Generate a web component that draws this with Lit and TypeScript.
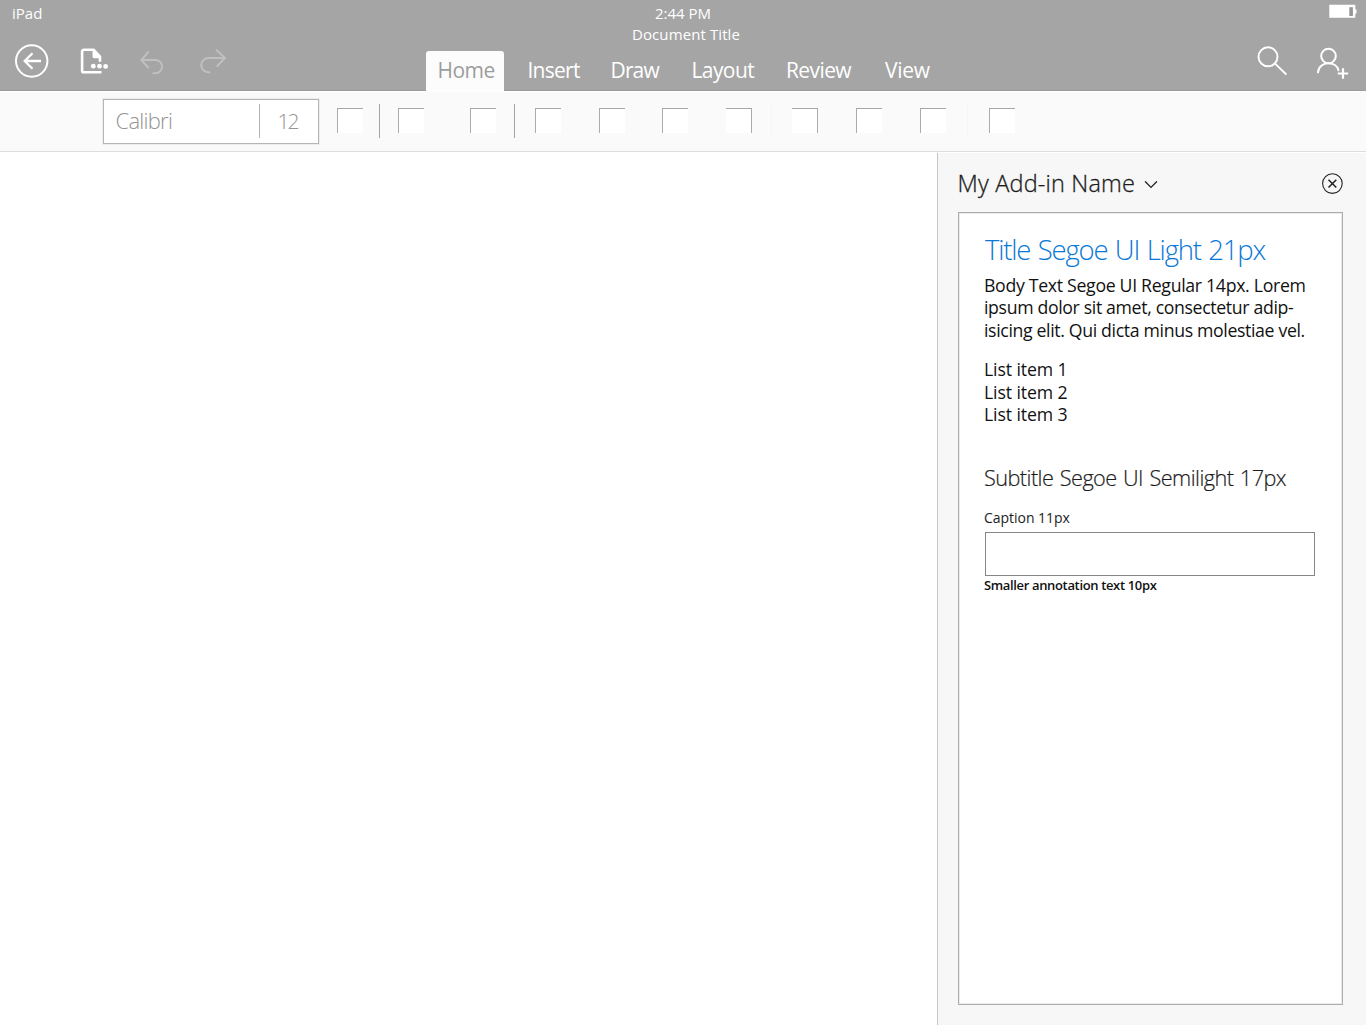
import { LitElement, html, css } from 'lit';
import { customElement } from 'lit/decorators.js';
import { classMap } from 'lit/directives/class-map.js';

const shared = css`
  :host, * { box-sizing: border-box; }
  svg { display: block; fill: none; stroke-linecap: round; stroke-linejoin: round; }
`;

const TABS = ['Home', 'Insert', 'Draw', 'Layout', 'Review', 'View'];

@customElement('app-header')
class AppHeader extends LitElement {
  static styles = [shared, css`
    :host { display: block; height: 91px; background: #a5a5a5; border-bottom: 1px solid #9b9b9b; color: #fff; }
    .status { display: grid; grid-template-columns: 1fr 120px 1fr; height: 26px; line-height: 26px; font-size: 15px; }
    .device { padding-left: 12px; }
    .time { text-align: center; }
    .battery { justify-self: end; padding: 4px 9px 0 0; }
    .main { display: flex; height: 65px; }
    .left { width: 426px; display: flex; padding: 18px 0 0 15px; }
    .back { margin-right: 29px; }
    .doc { margin: 2px 30px 0 0; }
    .undo { margin: 5px 34px 0 0; }
    .redo { margin-top: 4px; }
    .center { width: 520px; display: flex; flex-direction: column; }
    .title { height: 17px; line-height: 17px; font-size: 15px; letter-spacing: .1px; text-align: center; margin-bottom: 8px; }
    .tabs { display: flex; height: 40px; font-size: 21px; line-height: 38px; }
    .tab { flex: none; white-space: nowrap; }
    .home { width: 78px; padding-left: 11.5px; letter-spacing: -.5px; background: #fcfcfc; color: #9c9c9c; border-radius: 3px 3px 0 0; }
    .insert { margin-left: 23.500px; width: 83px; letter-spacing: -.75px; }
    .draw { width: 81px; letter-spacing: -.85px; }
    .layout { width: 94.500px; letter-spacing: -.6px; }
    .review { width: 99px; letter-spacing: -.6px; }
    .view { letter-spacing: -.3px; }
    .right { display: flex; margin-left: auto; padding: 20px 17px 0 0; }
    .search { margin-right: 29px; }
  `];

  render() {
    return html`
      <div class="status">
        <div class="device">iPad</div>
        <div class="time">2:44 PM</div>
        <div class="battery">
          <svg width="28" height="15" viewBox="0 0 28 15">
            <path fill="#fff" d="M.3.8h26v4.7h1.2v4h-1.2v4.2H.3z"/>
            <path fill="#969696" d="M20.3 3.2h3.6v8.8h-3.6z"/>
          </svg>
        </div>
      </div>
      <div class="main">
        <div class="left">
          <svg class="back" width="34" height="34" viewBox="0 0 34 34" stroke="#fff" stroke-width="2">
            <circle cx="16.7" cy="17" r="15.7"/>
            <path stroke-width="2.3" stroke-linecap="butt" stroke-linejoin="miter" d="M26 17H10M17.5 9.3L9.7 17l7.8 7.7"/>
          </svg>
          <svg class="doc" width="32" height="30" viewBox="0 0 32 30">
            <path stroke="#fff" stroke-width="2.6" stroke-linecap="butt" d="M23.5 26.3H6a1.9 1.9 0 0 1-1.9-1.9V5.6A1.9 1.9 0 0 1 6 3.700H15.500L22 10.600v5.200"/>
            <path fill="#fff" d="M14.500 3.700L23 12.300h-6.800a1.700 1.700 0 0 1-1.700-1.700z"/>
            <g fill="#fff"><circle cx="15.300" cy="20.200" r="2.400"/><circle cx="21.500" cy="20.200" r="2.400"/><circle cx="27.600" cy="20.400" r="2.400"/></g>
          </svg>
          <svg class="undo" width="25" height="28" viewBox="0 0 25 28" stroke="#c0c0c0" stroke-width="1.900">
            <path stroke-linejoin="miter" d="M8.300 3L1.300 11l7 7.500M1.800 11h13.700a6.400 6.400 0 0 1 0 13.200h-2.300"/>
          </svg>
          <svg class="redo" width="28" height="28" viewBox="0 0 28 28" stroke="#c0c0c0" stroke-width="1.900">
            <path stroke-linejoin="miter" d="M17.500 2L26 10l-7.700 8M25.500 10H9.300a7 7 0 0 0 0 14.200h1.200"/>
          </svg>
        </div>
        <div class="center">
          <div class="title">Document Title</div>
          <div class="tabs">
            ${TABS.map((t) => html`<div class=${classMap({ tab: true, [t.toLowerCase()]: true })}>${t}</div>`)}
          </div>
        </div>
        <div class="right">
          <svg class="search" width="31" height="30" viewBox="0 0 31 30" stroke="#fff" stroke-width="1.900">
            <circle cx="11" cy="10.800" r="9.500"/><path d="M18.100 17.600L28.800 28"/>
          </svg>
          <svg class="person" width="32" height="34" viewBox="0 0 32 34" stroke="#fff" stroke-width="2">
            <circle cx="11.500" cy="10" r="7.300"/>
            <path d="M1 26.400c.4-5.600 4.900-9.200 10.400-9.200 4.800 0 9 2.800 10.100 7"/>
            <path stroke-width="2.200" stroke-linecap="butt" d="M26 22.300v10.400M20.800 27.500h10.400"/>
          </svg>
        </div>
      </div>`;
  }
}

type Item = { kind: 'box' | 'flip' | 'rule' | 'faint'; gap: number };
/* gap: space before the item, in pixels */
const ITEMS: Item[] = [
  { kind: 'box', gap: 18 }, { kind: 'rule', gap: 16 }, { kind: 'box', gap: 18 },
  { kind: 'box', gap: 46 }, { kind: 'rule', gap: 18 }, { kind: 'box', gap: 20 },
  { kind: 'box', gap: 38 }, { kind: 'box', gap: 37 }, { kind: 'flip', gap: 38 },
  { kind: 'faint', gap: 19 }, { kind: 'flip', gap: 20 }, { kind: 'box', gap: 38 },
  { kind: 'box', gap: 38 }, { kind: 'faint', gap: 21 }, { kind: 'box', gap: 21 },
];

@customElement('app-toolbar')
class AppToolbar extends LitElement {
  static styles = [shared, css`
    :host { display: flex; align-items: center; height: 61px; padding-left: 103px; background: #fafafa; border-top: 1px solid #fff; border-bottom: 1px solid #dedede; color: #949494; }
    .combo { display: flex; align-items: center; width: 216px; height: 45px; margin-bottom: 1px; border: 1px solid #b5b5b5; background: #fff; box-shadow: 0 0 0 1px #ececec; }
    .font { width: 156px; height: 34px; padding-left: 11.5px; border-right: 1px solid #b4b4b4; font-size: 22px; font-weight: 300; line-height: 33px; letter-spacing: -.75px; }
    .size { flex: 1; padding-right: 3px; text-align: center; font-size: 21px; font-weight: 300; line-height: 33px; letter-spacing: -2px; }
    .item { flex: none; }
    .box, .flip { width: 26px; height: 25px; margin-bottom: 2px; background: #fff; border-top: 1px solid #a6a6a6; }
    .box { border-left: 1px solid #acacac; }
    .flip { border-right: 1px solid #acacac; }
    .rule, .faint { width: 1px; height: 34px; margin-bottom: 1px; background: #a4a4a4; }
    .faint { background: #f5f5f5; }
  `];

  render() {
    return html`
      <div class="combo"><div class="font">Calibri</div><div class="size">12</div></div>
      ${ITEMS.map((i) => html`<div class="item ${i.kind}" style="margin-left:${i.gap}px"></div>`)}`;
  }
}

@customElement('addin-pane')
class AddinPane extends LitElement {
  static styles = [shared, css`
    :host { display: flex; flex-direction: column; width: 429px; border-left: 1px solid #c6c6c6; background: #f7f7f7; padding: 0 23px 20px 20px; color: #1c1c1c; }
    .head { display: flex; align-items: center; height: 59px; }
    .name { font-size: 23.5px; font-weight: 300; -webkit-text-stroke: .3px currentColor; line-height: 30px; margin: 1px 9px 0 -.5px; letter-spacing: .17px; white-space: nowrap; }
    .chevron { margin-top: 4px; }
    .close { margin: 2px 0 0 auto; }
    .card { flex: 1; border: 1px solid #adadad; box-shadow: inset 0 0 0 1px #ebebeb; background: #fff; padding: 17px 27px 0 25px; white-space: nowrap; }
    .title { font-size: 27.5px; font-weight: 300; line-height: 40px; letter-spacing: -1.2px; word-spacing: 1.6px; color: #0a78d7; padding-left: 1px; margin-bottom: 4px; }
    .body, .list { font-size: 17.7px; line-height: 22.4px; color: #111; }
    .line { letter-spacing: -.35px; }
    .line:first-child { letter-spacing: -.31px; }
    .list { margin-top: 17px; letter-spacing: -.12px; }
    .subtitle { margin-top: 37.500px; font-size: 21.7px; font-weight: 300; -webkit-text-stroke: .2px currentColor; line-height: 30px; letter-spacing: -.56px; word-spacing: 1.400px; }
    .caption { margin-top: 14px; font-size: 14px; line-height: 22px; letter-spacing: -.03px; }
    .field { margin: 3px 0 0 1px; height: 44px; border: 1px solid #868686; background: #fff; }
    .note { font-size: 13px; font-weight: 600; line-height: 18px; letter-spacing: -.35px; color: #111; }
  `];

  render() {
    const lines = ['Body Text Segoe UI Regular 14px. Lorem', 'ipsum dolor sit amet, consectetur adip-', 'isicing elit. Qui dicta minus molestiae vel.'];
    return html`
      <div class="head">
        <div class="name">My Add-in Name</div>
        <svg class="chevron" width="14" height="10" viewBox="0 0 14 10" stroke="#222" stroke-width="1.300">
          <path stroke-linejoin="miter" d="M1.400 1.700l5.600 5.700 5.600-5.700"/>
        </svg>
        <svg class="close" width="22" height="22" viewBox="0 0 22 22" stroke="#222">
          <circle cx="11.400" cy="10.600" r="9.800" stroke-width="1.100"/>
          <path stroke-width="1.500" stroke-linecap="butt" d="M7.500 6.700l7.800 7.800M15.300 6.700l-7.800 7.800"/>
        </svg>
      </div>
      <div class="card">
        <div class="title">Title Segoe UI Light 21px</div>
        <div class="body">${lines.map((l) => html`<div class="line">${l}</div>`)}</div>
        <div class="list">${[1, 2, 3].map((n) => html`<div>List item ${n}</div>`)}</div>
        <div class="subtitle">Subtitle Segoe UI Semilight 17px</div>
        <div class="caption">Caption 11px</div>
        <div class="field"></div>
        <div class="note">Smaller annotation text 10px</div>
      </div>`;
  }
}

@customElement('app-root')
class AppRoot extends LitElement {
  static styles = css`
    :host { display: flex; flex-direction: column; width: 1366px; height: 1025px; overflow: hidden; background: #fff; font-family: "Open Sans", "Noto Sans", sans-serif; }
    .work { flex: 1; display: flex; justify-content: flex-end; border-top: 1px solid #fff; }
  `;
  render() {
    return html`<app-header></app-header><app-toolbar></app-toolbar><div class="work"><addin-pane></addin-pane></div>`;
  }
}
